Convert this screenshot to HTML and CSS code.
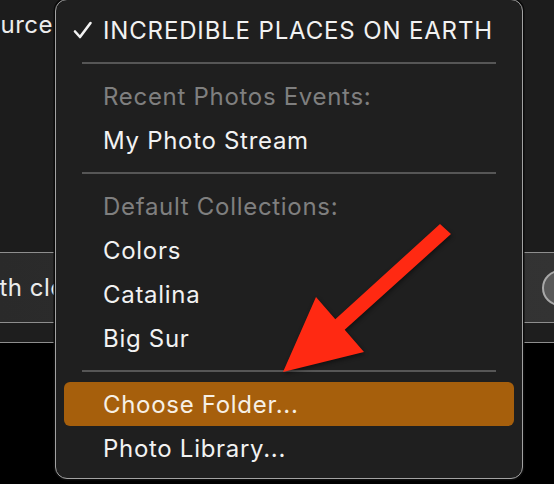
FILE: index.html
```html
<!DOCTYPE html>
<html>
<head>
<meta charset="utf-8">
<link rel="stylesheet" href="styles.css">
</head>
<body>
<div class="page">
  <div class="top">
    <div class="clip-left"><span>Source</span></div>
  </div>
  <div class="bar">
    <span class="bar-text">with clouds</span>
    <span class="knob"></span>
  </div>
  <div class="strip"></div>
  <div class="bottom"></div>

  <div class="menu">
    <div class="item checked">
      <svg class="check" width="20" height="18" viewBox="0 0 20 18"><path d="M2 10.5 L7 16 L17.5 2" fill="none" stroke="#f2f2f2" stroke-width="2.6" stroke-linecap="round" stroke-linejoin="round"/></svg>
      <span>INCREDIBLE PLACES ON EARTH</span>
    </div>
    <div class="sep"></div>
    <div class="item header">Recent Photos Events:</div>
    <div class="item">My Photo Stream</div>
    <div class="sep"></div>
    <div class="item header">Default Collections:</div>
    <div class="item">Colors</div>
    <div class="item">Catalina</div>
    <div class="item">Big Sur</div>
    <div class="sep"></div>
    <div class="item active">Choose Folder...</div>
    <div class="item">Photo Library...</div>
  </div>

  <svg class="arrow" width="554" height="484" viewBox="0 0 554 484">
    <polygon points="283,372 316,297 335.3,319.3 440,224 451,234 344.7,329.7 364,352" fill="#ff2912"/>
  </svg>
</div>
</body>
</html>
```

FILE: styles.css
```css
* { box-sizing: border-box; }
html, body { margin: 0; padding: 0; }
body {
  width: 554px;
  height: 484px;
  overflow: hidden;
  background: #000;
  font-family: Inter, "Noto Sans", sans-serif;
  color: #f2f2f2;
}
.page {
  position: relative;
  width: 554px;
  height: 484px;
  display: flex;
  flex-direction: column;
}
.top {
  height: 252px;
  background: #1c1c1c;
  padding-top: 10px;
}
.clip-left {
  width: 53px;
  display: flex;
  justify-content: flex-end;
  overflow: hidden;
  font-size: 24px;
  line-height: 29px;
  white-space: nowrap;
  color: #ececec;
  letter-spacing: 0.5px;
}
.bar {
  height: 71px;
  border-top: 1.5px solid #8e8e8e;
  border-bottom: 1.5px solid #8e8e8e;
  background: linear-gradient(90deg, #2a2a2a, #333333);
  display: flex;
  align-items: center;
  justify-content: space-between;
  overflow: hidden;
}
.bar-text {
  margin-left: -27px;
  font-size: 24px;
  white-space: nowrap;
  color: #ececec;
  letter-spacing: 0.5px;
}
.knob {
  width: 36px;
  height: 36px;
  border-radius: 50%;
  background: #585858;
  border: 2px solid #a8a8a8;
  margin-right: -24px;
}
.strip {
  height: 20px;
  background: #1e1e1e;
  border-bottom: 1.5px solid #8e8e8e;
}
.bottom {
  flex: 1;
  background: #000;
}
.menu {
  position: absolute;
  left: 55px;
  top: -1px;
  width: 468px;
  height: 480px;
  background: #1f1f1f;
  border: 1px solid #a2a2a2;
  border-radius: 12px;
  box-shadow: 0 0 0 1.5px #0a0a0a;
  padding: 8px 8px;
  display: flex;
  flex-direction: column;
}
.item {
  height: 44px;
  flex: none;
  display: flex;
  align-items: center;
  padding-left: 39px;
  font-size: 24px;
  letter-spacing: 0.7px;
  color: #f2f2f2;
  white-space: nowrap;
  border-radius: 6px;
}
.item.checked { letter-spacing: 0.85px; }
.item.header { color: #7f7f7f; }
.item.active { background: #a65f0c; color: #f6f0e6; }
.check {
  margin-left: -30px;
  margin-right: 10px;
  flex: none;
}
.sep {
  height: 22px;
  flex: none;
  display: flex;
  align-items: center;
  padding: 0 18px;
}
.sep::before {
  content: "";
  display: block;
  width: 100%;
  height: 2px;
  background: #565656;
}
.arrow {
  position: absolute;
  left: 0;
  top: 0;
  pointer-events: none;
  filter: drop-shadow(1px 2px 2px rgba(0,0,0,0.45));
}
```
